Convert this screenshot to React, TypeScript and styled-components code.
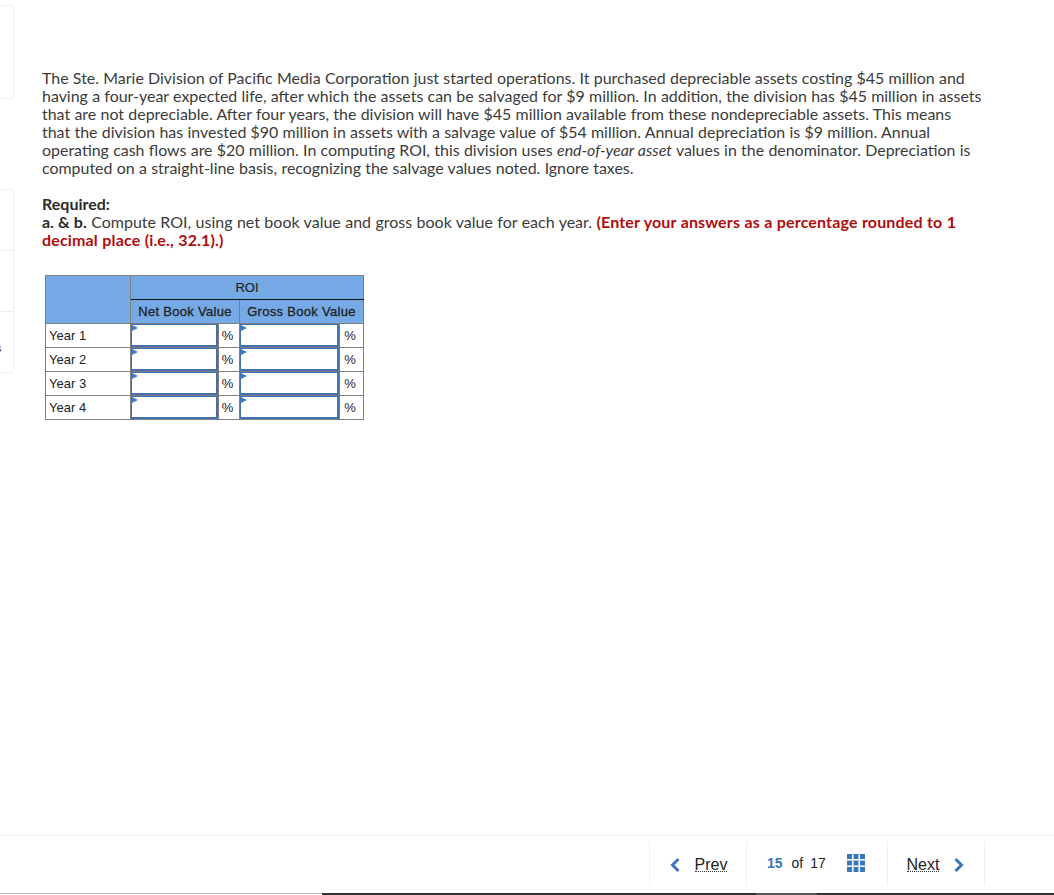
import { createGlobalStyle, styled } from 'styled-components';

const years = ['Year 1', 'Year 2', 'Year 3', 'Year 4'];

const App = () => {
  return (
    <>
      <GlobalStyle />
      <Page>
        <Body>
          <Rail>
            <RailCard $top={5} $height={94} />
            <RailCard $top={90} $height={184}>
              <RailRow $height={61} />
              <RailRow $height={61} />
              <RailRow $height={62}>
                <RailLabel>s</RailLabel>
              </RailRow>
            </RailCard>
          </Rail>
          <Content>
            <Question>
              The Ste. Marie Division of Pacific Media Corporation just started operations. It purchased depreciable assets costing $45 million and
              <br />
              having a four-year expected life, after which the assets can be salvaged for $9 million. In addition, the division has $45 million in assets
              <br />
              that are not depreciable. After four years, the division will have $45 million available from these nondepreciable assets. This means
              <br />
              that the division has invested $90 million in assets with a salvage value of $54 million. Annual depreciation is $9 million. Annual
              <br />
              operating cash flows are $20 million. In computing ROI, this division uses <em>end-of-year asset</em> values in the denominator. Depreciation is
              <br />
              computed on a straight-line basis, recognizing the salvage values noted. Ignore taxes.
            </Question>
            <Required>
              <strong>Required:</strong>
              <br />
              <strong>a. &amp; b.</strong> Compute ROI, using net book value and gross book value for each year.{' '}
              <Warning>
                (Enter your answers as a percentage rounded to 1
                <br />
                decimal place (i.e., 32.1).)
              </Warning>
            </Required>
            <RoiTable>
              <colgroup>
                <col width={85} />
                <col width={88} />
                <col width={21} />
                <col width={100} />
                <col width={24} />
              </colgroup>
              <thead>
                <tr>
                  <HeadCell rowSpan={2} />
                  <TitleCell colSpan={4}>ROI</TitleCell>
                </tr>
                <tr>
                  <HeadCell colSpan={2}>Net Book Value</HeadCell>
                  <HeadCell colSpan={2}>Gross Book Value</HeadCell>
                </tr>
              </thead>
              <tbody>
                {years.map((year) => (
                  <tr key={year}>
                    <YearCell>{year}</YearCell>
                    <InputCell>
                      <AnswerBox />
                    </InputCell>
                    <UnitCell>%</UnitCell>
                    <InputCell>
                      <AnswerBox />
                    </InputCell>
                    <UnitCell>%</UnitCell>
                  </tr>
                ))}
              </tbody>
            </RoiTable>
          </Content>
        </Body>
        <Footer>
          <Pager>
            <PagerButton>
              <Chevron viewBox="0 0 12 16">
                <path d="M9.5 2 L3.5 8 L9.5 14" />
              </Chevron>
              <PagerLink>Prev</PagerLink>
            </PagerButton>
            <PageStatus>
              <Current>15</Current>
              <Of>of</Of>
              <Total>17</Total>
              <GridIcon viewBox="0 0 18 18">
                <rect x="0" y="0" width="5" height="5" />
                <rect x="6.5" y="0" width="5" height="5" />
                <rect x="13" y="0" width="5" height="5" />
                <rect x="0" y="6.5" width="5" height="5" />
                <rect x="6.5" y="6.5" width="5" height="5" />
                <rect x="13" y="6.5" width="5" height="5" />
                <rect x="0" y="13" width="5" height="5" />
                <rect x="6.5" y="13" width="5" height="5" />
                <rect x="13" y="13" width="5" height="5" />
              </GridIcon>
            </PageStatus>
            <PagerButton>
              <PagerLink>Next</PagerLink>
              <Chevron viewBox="0 0 12 16">
                <path d="M2.5 2 L8.5 8 L2.5 14" />
              </Chevron>
            </PagerButton>
          </Pager>
        </Footer>
        <BottomBar>
          <BarTrack />
          <BarThumb />
          <BarLight />
          <BarEnd />
        </BottomBar>
      </Page>
    </>
  );
};

export default App;

const GlobalStyle = createGlobalStyle`
  html, body {
    margin: 0;
    padding: 0;
    background: #fff;
  }
  body {
    font-family: "Lato", "Liberation Sans", sans-serif;
    overflow: hidden;
  }
`;

const Page = styled.div`
  width: 1054px;
  height: 895px;
  display: flex;
  flex-direction: column;
  overflow: hidden;
`;

const Body = styled.div`
  flex: 1;
  min-height: 0;
  display: flex;
`;

const Rail = styled.div`
  width: 14px;
  flex: none;
  display: flex;
  flex-direction: column;
`;

const RailCard = styled.div<{ $top: number; $height: number }>`
  margin-top: ${(p) => p.$top}px;
  height: ${(p) => p.$height}px;
  flex: none;
  box-sizing: border-box;
  border: 1px solid #eeeeee;
  border-left: none;
  border-radius: 0 4px 4px 0;
`;

const RailRow = styled.div<{ $height: number }>`
  height: ${(p) => p.$height}px;
  box-sizing: border-box;
  border-bottom: 1px solid #eeeeee;
  position: relative;

  &:last-child {
    border-bottom: none;
  }
`;

const RailLabel = styled.span`
  position: absolute;
  left: -4px;
  top: 29px;
  font: 11px/14px "Liberation Sans", sans-serif;
  color: #444;
`;

const Content = styled.div`
  padding: 69px 0 0 28px;
  flex: 1;
  min-width: 0;
`;

const Question = styled.p`
  margin: 0;
  width: 960px;
  font-size: 15.95px;
  word-spacing: 0.2px;
  line-height: 18px;
  color: #3b3b3b;
  white-space: nowrap;
`;

const Required = styled.p`
  margin: 18px 0 0;
  width: 960px;
  font-size: 16px;
  word-spacing: 0.3px;
  line-height: 18px;
  color: #3b3b3b;
  white-space: nowrap;

  strong {
    font-weight: 700;
    color: #2b2b2b;
  }
`;

const Warning = styled.span`
  font-weight: 700;
  letter-spacing: 0.15px;
  color: #b00d0d;
`;

const RoiTable = styled.table`
  margin: 26px 0 0 3px;
  border-collapse: collapse;
  table-layout: fixed;
  width: 318px;
  font-family: "Liberation Sans", Arial, sans-serif;
  font-size: 13px;
  color: #222;
`;

const HeadCell = styled.th`
  height: 23px;
  padding: 0;
  background: #75aae6;
  border: 1px solid #7f7f7f;
  font-weight: 400;
  font-size: 13px;
  letter-spacing: 0.3px;
  -webkit-text-stroke: 0.3px #222;
  text-align: center;
  white-space: nowrap;
`;

const TitleCell = styled(HeadCell)`
  border-bottom: 1px solid #111;
  letter-spacing: 0;
  -webkit-text-stroke: 0.15px #222;
`;

const YearCell = styled.td`
  height: 23px;
  padding: 0 0 0 3px;
  border: 1px solid #7f7f7f;
  white-space: nowrap;
`;

const InputCell = styled.td`
  height: 23px;
  padding: 0;
  border: 1px solid #7f7f7f;
  position: relative;
`;

const AnswerBox = styled.div`
  position: absolute;
  inset: 0;
  border: 2px solid #4272ab;
  border-width: 1px 2px 2px 1px;
  background: #fff;

  &::before {
    content: '';
    position: absolute;
    left: 0;
    top: 0;
    border-left: 6px solid #3f7cc4;
    border-top: 3.5px solid transparent;
    border-bottom: 3.5px solid transparent;
  }
`;

const UnitCell = styled.td`
  height: 23px;
  padding: 0 3px 0 0;
  border: 1px solid #7f7f7f;
  text-align: center;
  font-size: 13px;
`;

const Footer = styled.footer`
  height: 58px;
  flex: none;
  box-sizing: border-box;
  border-top: 1px solid #f1f1f1;
  padding: 5px 69px 0 0;
  display: flex;
  justify-content: flex-end;
`;

const Pager = styled.nav`
  height: 44px;
  display: flex;
  border-right: 1px solid #f1f1f1;
  font-family: "Liberation Sans", Arial, sans-serif;
  font-size: 16px;
  color: #222;
`;

const PagerButton = styled.div`
  width: 97px;
  box-sizing: border-box;
  border-left: 1px solid #f1f1f1;
  display: flex;
  align-items: center;
  justify-content: center;
  gap: 14px;
  padding-top: 3px;
`;

const Chevron = styled.svg`
  width: 12px;
  height: 16px;
  fill: none;
  stroke: #3a76bd;
  stroke-width: 3;
`;

const PagerLink = styled.span`
  border-bottom: 1px dotted #333;
  line-height: 13px;
`;

const PageStatus = styled.div`
  width: 141px;
  box-sizing: border-box;
  border-left: 1px solid #f1f1f1;
  display: flex;
  align-items: center;
  padding: 0 0 0 20px;
  font-size: 14px;
`;

const Current = styled.span`
  font-weight: 700;
  color: #3a76bd;
`;

const Of = styled.span`
  margin-left: 9px;
`;

const Total = styled.span`
  margin-left: 7px;
`;

const GridIcon = styled.svg`
  width: 18px;
  height: 18px;
  margin-left: 21px;
  fill: #3a76bd;
`;

const BottomBar = styled.div`
  height: 2px;
  flex: none;
  display: flex;
`;

const BarTrack = styled.div`
  width: 322px;
  height: 1px;
  background: #bdbdbd;
`;

const BarThumb = styled.div`
  width: 434px;
  background: #333;
`;

const BarLight = styled.div`
  width: 61px;
  background: #555;
`;

const BarEnd = styled.div`
  flex: 1;
  background: #333;
`;
